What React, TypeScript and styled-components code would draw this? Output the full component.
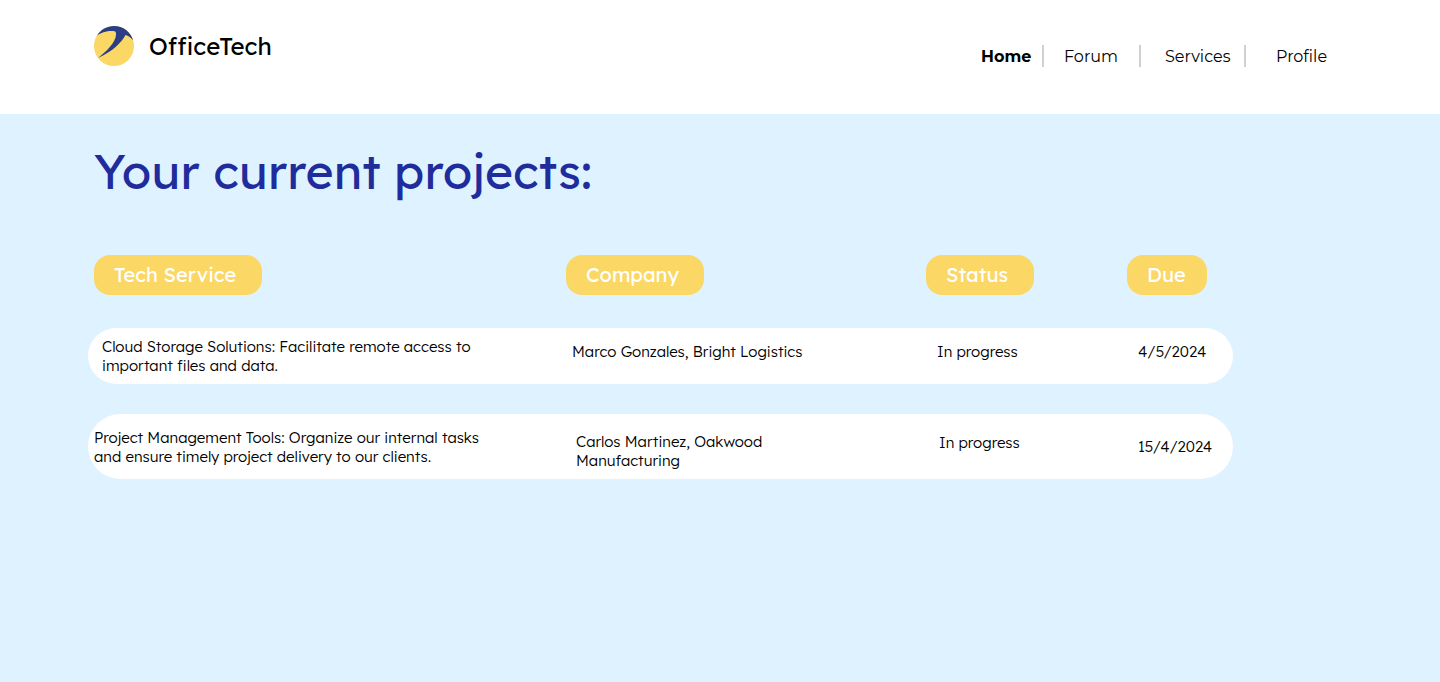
import React from "react";
import styled, { createGlobalStyle } from "styled-components";

const GlobalStyle = createGlobalStyle`
  *, *::before, *::after { box-sizing: border-box; }
  body {
    margin: 0;
    background: #def2ff;
    color: #000;
    font-family: Lexend, Inter, "Liberation Sans", sans-serif;
  }
`;

const Page = styled.div`
  min-height: 100vh;
  display: flex;
  flex-direction: column;
`;

const Header = styled.header`
  display: flex;
  justify-content: space-between;
  align-items: flex-start;
  min-height: 114px;
  padding: 26px 112px 0 94px;
  background: #fff;
`;

const Brand = styled.a`
  display: flex;
  align-items: center;
  gap: 15px;
  color: #000;
  font-size: 24px;
  line-height: 40px;
  text-decoration: none;
`;

const Nav = styled.nav`
  display: flex;
  margin-top: 19px;
  font-family: Montserrat, Inter, "Liberation Sans", sans-serif;
`;

const NavLink = styled.a<{ $width: number; $start: number; $current?: boolean }>`
  width: ${(p) => p.$width}px;
  height: 22px;
  padding-left: ${(p) => p.$start}px;
  border-right: 2px solid #d0d0d0;
  color: #000;
  font-size: 16px;
  line-height: 24px;
  font-weight: ${(p) => (p.$current ? 700 : 400)};
  text-decoration: none;

  &:last-child { border-right: 0; }
`;

const Main = styled.main`
  flex: 1;
  padding: 27px 207px 27px 88px;
`;

const Title = styled.h1`
  margin: 0 0 24px;
  padding-left: 6px;
  color: #202c9c;
  font-size: 48px;
  line-height: 60px;
  font-weight: 400;
`;

const Projects = styled.table`
  width: 100%;
  table-layout: fixed;
  border-collapse: separate;
  border-spacing: 0 30px;
`;

const Heading = styled.th<{ $width?: number }>`
  width: ${(p) => (p.$width ? `${p.$width}px` : "auto")};
  padding: 0 0 3px 6px;
  text-align: left;
`;

const Pill = styled.span<{ $width: number }>`
  display: block;
  width: ${(p) => p.$width}px;
  padding-left: 20px;
  border-radius: 16px;
  background: #fbd765;
  color: #fff;
  font-size: 20px;
  line-height: 40px;
  font-weight: 400;
`;

const Cell = styled.td<{ $start: number; $top: number; $middle?: boolean }>`
  padding: ${(p) => (p.$middle ? 0 : p.$top)}px 0 ${(p) => (p.$middle ? 0 : 9)}px ${(p) => p.$start}px;
  vertical-align: ${(p) => (p.$middle ? "middle" : "top")};
  background: #fff;
  font-size: 15px;
  line-height: 19px;
  font-weight: 300;

  &:first-child { border-radius: 33px 0 0 33px; }
  &:last-child { border-radius: 0 33px 33px 0; }
`;

const Text = styled.div<{ $max: number }>`
  max-width: ${(p) => p.$max}px;
`;

const Logo = () => (
  <svg width="40" height="40" viewBox="0 0 40 40" aria-hidden="true">
    <circle cx="20" cy="20" r="20" fill="#fbd765" />
    <path
      fill="#2b3d85"
      d="M3 9.500C7 3.500 13 0 20 0C29 0 37 6 39.200 14.500C37 11.500 34.500 9.800 31.500 9C28 16 18 26 4 32C12 26 22 16 22 8.500C22 6.500 21.800 5.500 20.500 5.200C14 4.500 7 6.500 3 9.500Z"
    />
  </svg>
);

const links = [
  { label: "Home", width: 75, start: 12, current: true },
  { label: "Forum", width: 97, start: 20 },
  { label: "Services", width: 105, start: 24 },
  { label: "Profile", width: 82, start: 30 },
];

const columns = [
  { label: "Tech Service", pill: 168 },
  { label: "Company", pill: 138, width: 360 },
  { label: "Status", pill: 108, width: 201 },
  { label: "Due", pill: 80, width: 112 },
];

const projects = [
  [
    { text: "Cloud Storage Solutions: Facilitate remote access to important files and data.", start: 14, top: 9 },
    { text: "Marco Gonzales, Bright Logistics", start: 12, top: 14 },
    { text: "In progress", start: 17, top: 14 },
    { text: "4/5/2024", start: 17, top: 14 },
  ],
  [
    { text: "Project Management Tools: Organize our internal tasks and ensure timely project delivery to our clients.", start: 6, top: 14 },
    { text: "Carlos Martinez, Oakwood Manufacturing", start: 16, top: 18 },
    { text: "In progress", start: 19, top: 19 },
    { text: "15/4/2024", start: 17, top: 18, middle: true },
  ],
];

const textWidths = [400, 240, 160, 90];

export default function App() {
  return (
    <Page>
      <GlobalStyle />
      <Header>
        <Brand href="#">
          <Logo />
          OfficeTech
        </Brand>
        <Nav aria-label="Main">
          {links.map((l) => (
            <NavLink
              key={l.label}
              href="#"
              $width={l.width}
              $start={l.start}
              $current={l.current}
              aria-current={l.current ? "page" : undefined}
            >
              {l.label}
            </NavLink>
          ))}
        </Nav>
      </Header>
      <Main>
        <Title>Your current projects:</Title>
        <Projects>
          <thead>
            <tr>
              {columns.map((c) => (
                <Heading key={c.label} scope="col" $width={c.width}>
                  <Pill $width={c.pill}>{c.label}</Pill>
                </Heading>
              ))}
            </tr>
          </thead>
          <tbody>
            {projects.map((cells, row) => (
              <tr key={row}>
                {cells.map((c, i) => (
                  <Cell key={i} $start={c.start} $top={c.top} $middle={"middle" in c}>
                    <Text $max={textWidths[i]}>{c.text}</Text>
                  </Cell>
                ))}
              </tr>
            ))}
          </tbody>
        </Projects>
      </Main>
    </Page>
  );
}
